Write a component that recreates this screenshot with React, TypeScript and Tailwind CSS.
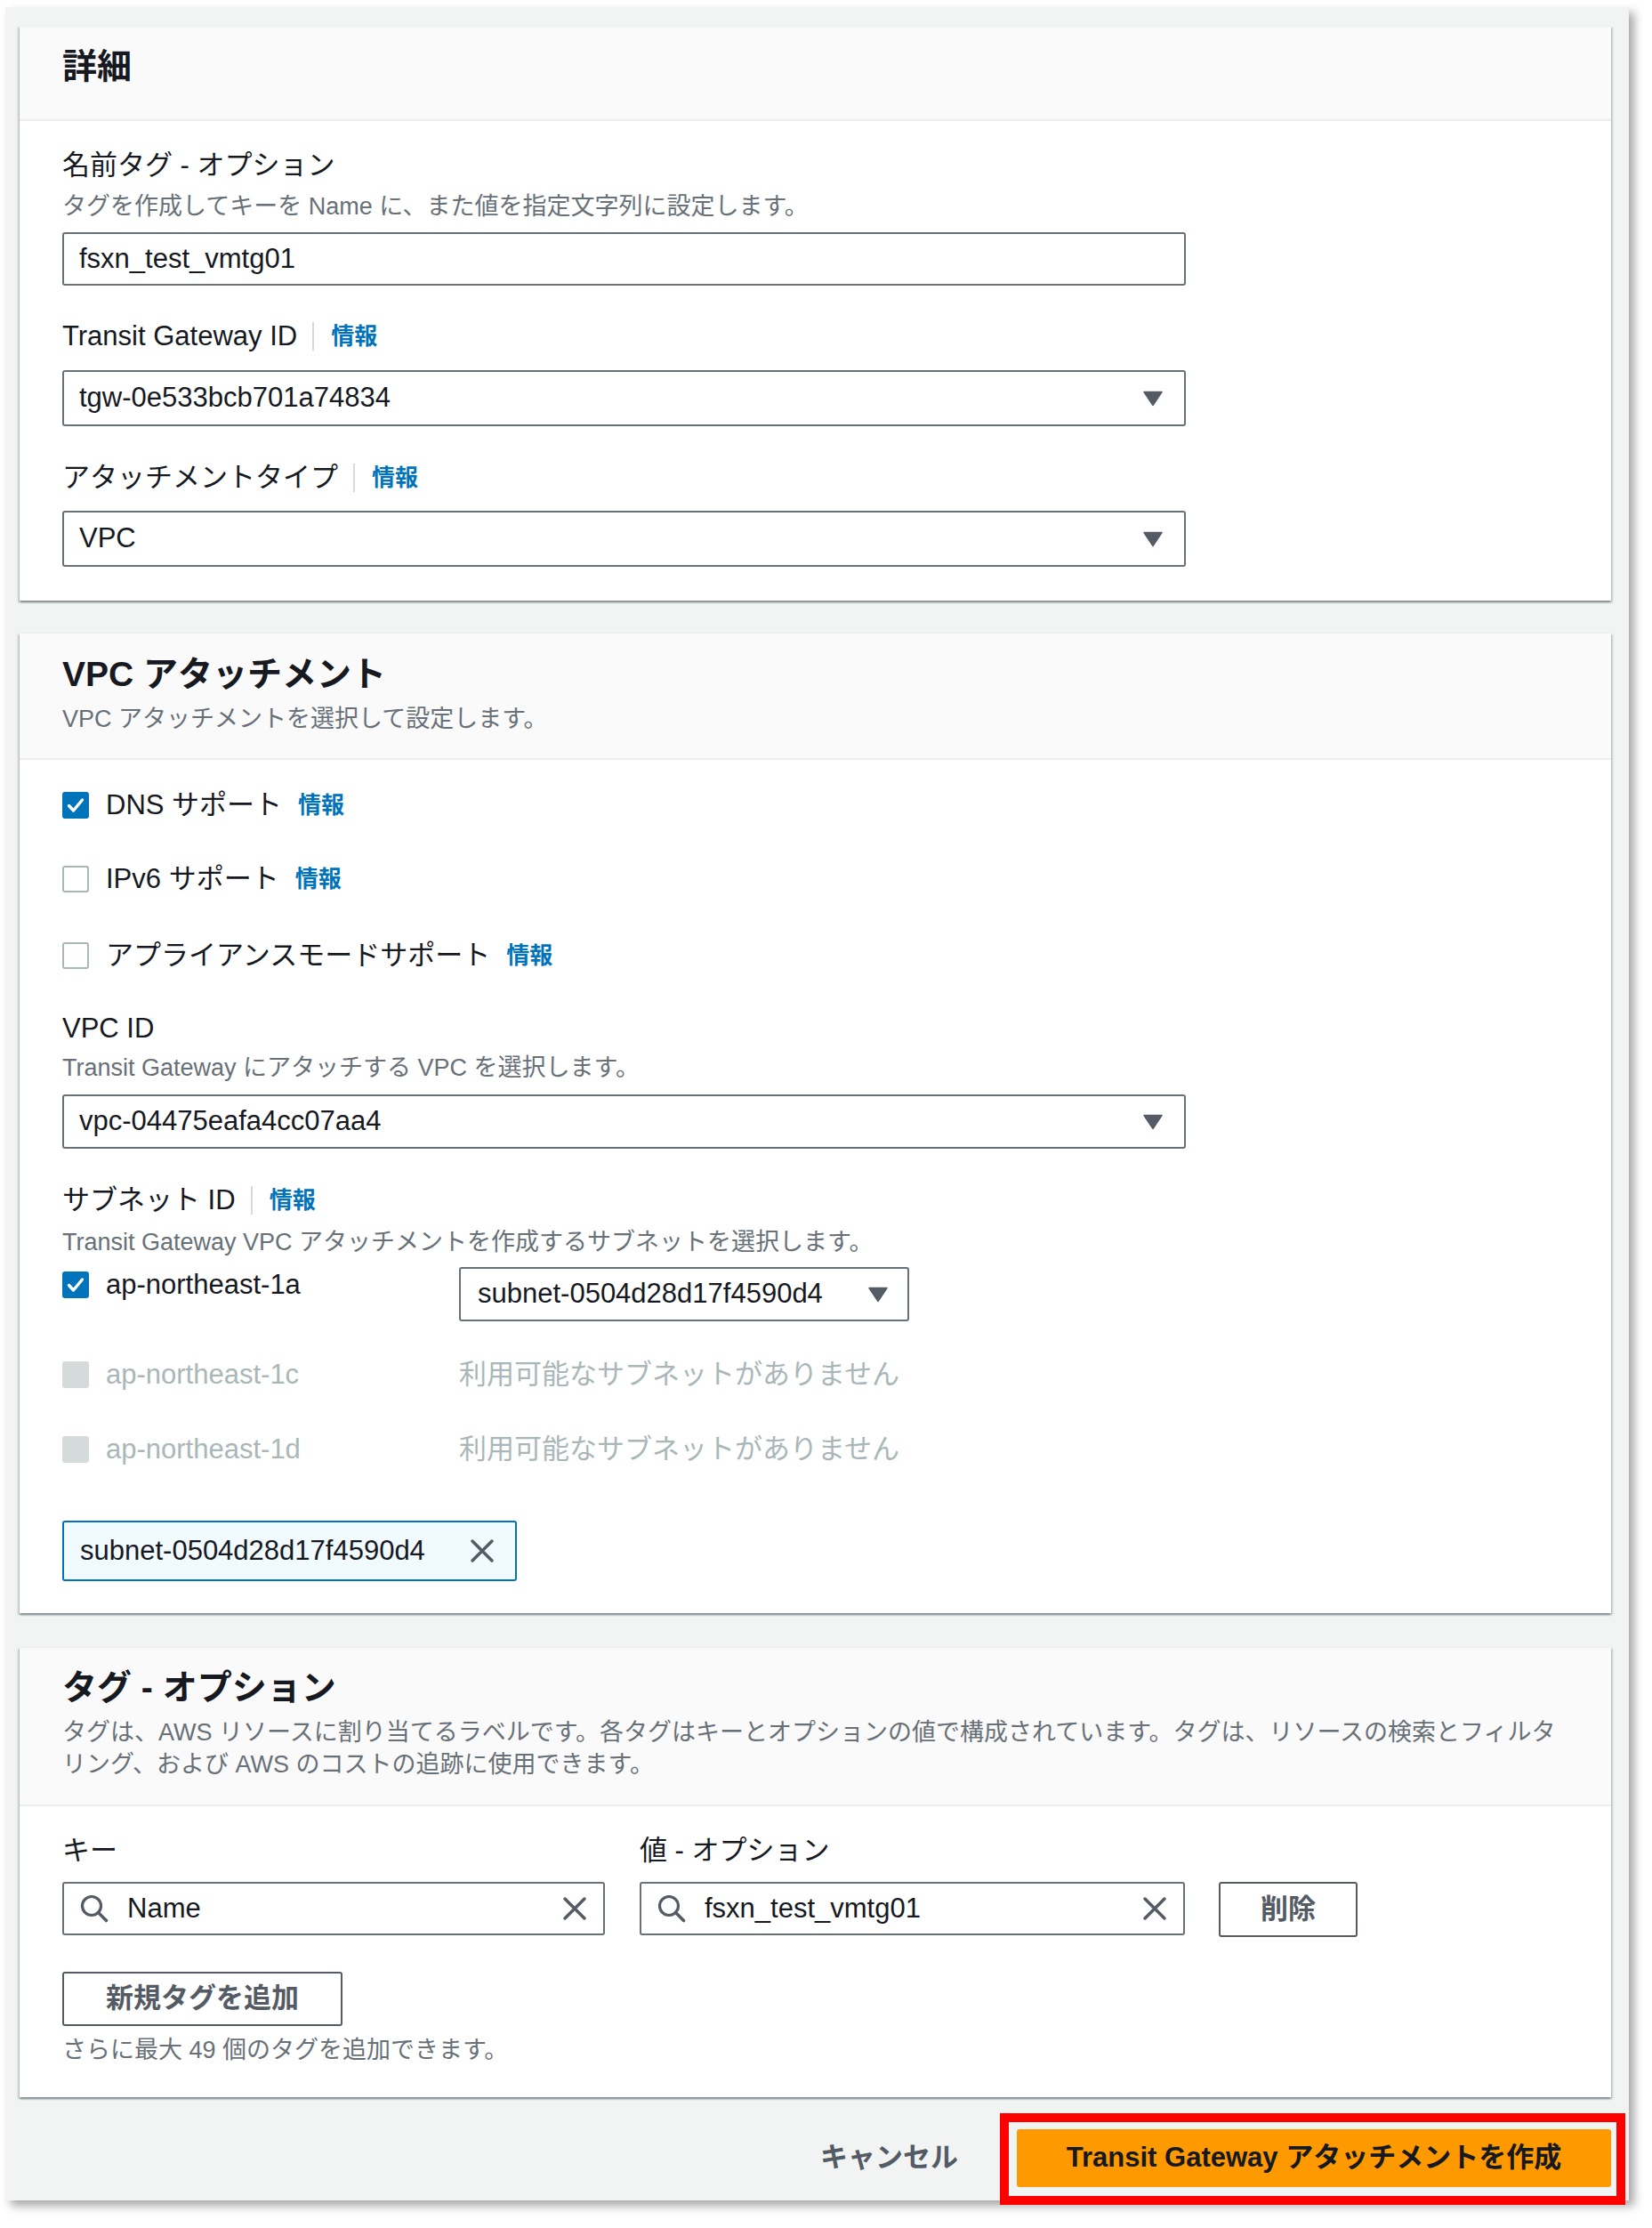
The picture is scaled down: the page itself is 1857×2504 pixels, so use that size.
const FONT = "font-['Liberation_Sans','Noto_Sans_CJK_JP',sans-serif]";

function Caret() {
  return (
    <svg width="22" height="18" viewBox="0 0 22 18" className="shrink-0">
      <path d="M1 1.5h20L11 16.5z" fill="#545b64" stroke="#545b64" strokeWidth="1.5" strokeLinejoin="round" />
    </svg>
  );
}

function XIcon({ size = 30 }: { size?: number }) {
  return (
    <svg width={size} height={size} viewBox="0 0 30 30" className="shrink-0">
      <path d="M4 4l22 22M26 4L4 26" stroke="#545b64" strokeWidth="3.5" strokeLinecap="round" fill="none" />
    </svg>
  );
}

function SearchIcon() {
  return (
    <svg width="34" height="34" viewBox="0 0 34 34" className="shrink-0">
      <circle cx="14" cy="14" r="10.5" stroke="#545b64" strokeWidth="3.2" fill="none" />
      <path d="M21.5 21.5l9 9" stroke="#545b64" strokeWidth="3.6" strokeLinecap="round" />
    </svg>
  );
}

function Info({ divider = true }: { divider?: boolean }) {
  return divider ? (
    <span className="ml-[17px] flex h-[32px] items-center border-l-2 border-[#d5dbdb] pl-[19px] text-[26px] font-bold text-[#0073bb]">
      情報
    </span>
  ) : (
    <span className="ml-[18px] text-[26px] font-bold text-[#0073bb]">情報</span>
  );
}

function Label({ children, info, className = "" }: { children: React.ReactNode; info?: boolean; className?: string }) {
  return (
    <div className={`flex h-[40px] items-center text-[31px] leading-[40px] text-[#16191f] ${className}`}>
      <span>{children}</span>
      {info && <Info />}
    </div>
  );
}

function Desc({ children, className = "" }: { children: React.ReactNode; className?: string }) {
  return <p className={`text-[27px] leading-[36px] text-[#687078] ${className}`}>{children}</p>;
}

function Field({ children, select, className = "" }: { children: React.ReactNode; select?: boolean; className?: string }) {
  return (
    <div
      className={`flex w-[1263px] items-center justify-between rounded-[3px] border-2 border-[#687078] bg-white pl-[17px] pr-[24px] text-[31px] text-[#16191f] ${className}`}
    >
      <span>{children}</span>
      {select && <Caret />}
    </div>
  );
}

function Check({ state }: { state: "on" | "off" | "disabled" }) {
  if (state === "on")
    return (
      <span className="flex h-[30px] w-[30px] shrink-0 items-center justify-center rounded-[3px] bg-[#0073bb]">
        <svg width="22" height="22" viewBox="0 0 22 22">
          <path d="M3.5 11.5l5 5.5 10-12" stroke="white" strokeWidth="3.4" fill="none" strokeLinecap="round" strokeLinejoin="round" />
        </svg>
      </span>
    );
  if (state === "off")
    return <span className="h-[30px] w-[30px] shrink-0 rounded-[3px] border-2 border-[#aab7b8] bg-white" />;
  return <span className="h-[30px] w-[30px] shrink-0 rounded-[3px] bg-[#d5dbdb]" />;
}

function CheckRow({ children, checked, className = "" }: { children: React.ReactNode; checked?: boolean; className?: string }) {
  return (
    <div className={`flex h-[40px] items-center text-[31px] text-[#16191f] ${className}`}>
      <Check state={checked ? "on" : "off"} />
      <span className="ml-[19px]">{children}</span>
      <Info divider={false} />
    </div>
  );
}

const PANEL =
  "bg-white border-t border-[#eaeded] shadow-[0_2px_2px_0_rgba(0,28,36,0.3),2px_2px_2px_0_rgba(0,28,36,0.15),-2px_2px_2px_0_rgba(0,28,36,0.15)]";
const HEADER = "bg-[#fafafa] border-b-2 border-[#eaeded] px-[48px] pt-[21px]";
const TITLE = "text-[39px] leading-[48px] font-bold text-[#16191f]";

export default function App() {
  return (
    <div className={`h-[2504px] w-[1857px] overflow-hidden bg-white pl-[6px] pt-[8px] ${FONT}`}>
      <div className="h-[2465px] w-[1825px] bg-[#f2f3f3] pl-[16px] pr-[20px] pt-[21px] shadow-[6px_6px_10px_rgba(0,0,0,0.35)]">
        {/* 詳細 */}
        <section className={PANEL}>
          <div className={`${HEADER} h-[106px]`}>
            <h2 className={TITLE}>詳細</h2>
          </div>
          <div className="px-[48px] pb-[38px] pt-[30px]">
            <Label>名前タグ - オプション</Label>
            <Desc className="mt-[8px]">タグを作成してキーを Name に、また値を指定文字列に設定します。</Desc>
            <Field className="mt-[11px] h-[60px]">fsxn_test_vmtg01</Field>
            <Label info className="mt-[37px]">Transit Gateway ID</Label>
            <Field select className="mt-[18px] h-[63px]">tgw-0e533bcb701a74834</Field>
            <Label info className="mt-[38px]">アタッチメントタイプ</Label>
            <Field select className="mt-[17px] h-[63px]">VPC</Field>
          </div>
        </section>

        {/* VPC アタッチメント */}
        <section className={`${PANEL} mt-[36px]`}>
          <div className={`${HEADER} h-[142px] pt-[22px]`}>
            <h2 className={TITLE}>VPC アタッチメント</h2>
            <Desc className="mt-[8px]">VPC アタッチメントを選択して設定します。</Desc>
          </div>
          <div className="px-[48px] pb-[36px] pt-[31px]">
            <CheckRow checked>DNS サポート</CheckRow>
            <CheckRow className="mt-[43px]">IPv6 サポート</CheckRow>
            <CheckRow className="mt-[46px]">アプライアンスモードサポート</CheckRow>

            <Label className="mt-[42px]">VPC ID</Label>
            <Desc className="mt-[6px]">Transit Gateway にアタッチする VPC を選択します。</Desc>
            <Field select className="mt-[12px] h-[61px]">vpc-04475eafa4cc07aa4</Field>

            <Label info className="mt-[38px]">サブネット ID</Label>
            <Desc className="mt-[9px]">Transit Gateway VPC アタッチメントを作成するサブネットを選択します。</Desc>

            <div className="mt-[10px] flex items-start">
              <div className="flex h-[40px] w-[446px] items-center text-[31px] text-[#16191f]">
                <Check state="on" />
                <span className="ml-[19px]">ap-northeast-1a</span>
              </div>
              <div className="flex h-[61px] w-[506px] items-center justify-between rounded-[3px] border-2 border-[#687078] bg-white pl-[19px] pr-[22px] text-[31px] text-[#16191f]">
                <span>subnet-0504d28d17f4590d4</span>
                <Caret />
              </div>
            </div>
            {["ap-northeast-1c", "ap-northeast-1d"].map((az, i) => (
              <div key={az} className={`flex h-[40px] items-center text-[31px] text-[#aab7b8] ${i === 0 ? "mt-[40px]" : "mt-[44px]"}`}>
                <div className="flex w-[446px] items-center">
                  <Check state="disabled" />
                  <span className="ml-[19px]">{az}</span>
                </div>
                <span>利用可能なサブネットがありません</span>
              </div>
            ))}

            <div className="mt-[60px] flex h-[68px] w-[511px] items-center justify-between rounded-[3px] border-2 border-[#0073bb] bg-[#f1faff] pl-[18px] pr-[22px] text-[31px] text-[#16191f]">
              <span>subnet-0504d28d17f4590d4</span>
              <XIcon />
            </div>
          </div>
        </section>

        {/* タグ */}
        <section className={`${PANEL} mt-[38px]`}>
          <div className={`${HEADER} h-[178px]`}>
            <h2 className={TITLE}>タグ - オプション</h2>
            <Desc className="mt-[8px]">
              タグは、AWS リソースに割り当てるラベルです。各タグはキーとオプションの値で構成されています。タグは、リソースの検索とフィルタ
              <br />
              リング、および AWS のコストの追跡に使用できます。
            </Desc>
          </div>
          <div className="px-[48px] pb-[35px] pt-[30px]">
            <div className="flex gap-[39px]">
              <Label className="w-[610px]">キー</Label>
              <Label className="w-[613px]">値 - オプション</Label>
            </div>
            <div className="mt-[15px] flex items-start">
              <div className="flex h-[60px] w-[610px] items-center rounded-[3px] border-2 border-[#687078] bg-white pl-[17px] pr-[17px] text-[31px] text-[#16191f]">
                <SearchIcon />
                <span className="ml-[20px] flex-1">Name</span>
                <XIcon />
              </div>
              <div className="ml-[39px] flex h-[60px] w-[613px] items-center rounded-[3px] border-2 border-[#687078] bg-white pl-[17px] pr-[17px] text-[31px] text-[#16191f]">
                <SearchIcon />
                <span className="ml-[20px] flex-1">fsxn_test_vmtg01</span>
                <XIcon />
              </div>
              <button className="ml-[38px] flex h-[62px] w-[156px] items-center justify-center rounded-[3px] border-2 border-[#545b64] bg-white text-[31px] font-bold text-[#545b64]">
                削除
              </button>
            </div>
            <button className="mt-[39px] flex h-[61px] w-[315px] items-center justify-center rounded-[3px] border-2 border-[#545b64] bg-white text-[31px] font-bold text-[#545b64]">
              新規タグを追加
            </button>
            <Desc className="mt-[9px]">さらに最大 49 個のタグを追加できます。</Desc>
          </div>
        </section>

        {/* footer */}
        <div className="mt-[36px] flex items-center justify-end">
          <span className="mr-[66px] text-[31px] font-bold text-[#545b64]">キャンセル</span>
          <div className="relative">
            <div className="pointer-events-none absolute -bottom-[20px] -left-[19px] -right-[16px] -top-[18px] border-[10px] border-[#ff0000]" />
            <button className="relative flex h-[65px] w-[668px] items-center justify-center rounded-[3px] bg-[#ff9900] text-[31px] font-bold text-[#16191f]">
              Transit Gateway アタッチメントを作成
            </button>
          </div>
        </div>
      </div>
    </div>
  );
}
